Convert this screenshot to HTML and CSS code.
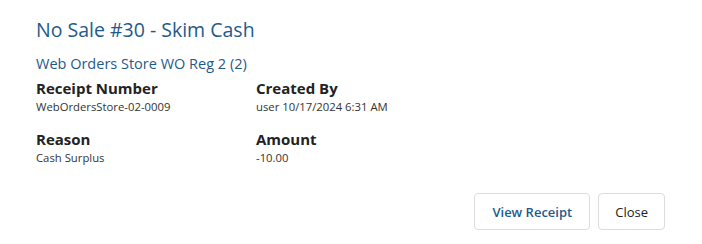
FILE: index.html
```html
<!DOCTYPE html>
<html>
<head>
<meta charset="utf-8">
<link rel="stylesheet" href="styles.css">
</head>
<body>
<div class="dialog">
  <h1 class="title">No Sale #30 - Skim Cash</h1>
  <h2 class="subtitle">Web Orders Store WO Reg 2 (2)</h2>
  <div class="fields">
    <div class="field">
      <div class="label">Receipt Number</div>
      <div class="value">WebOrdersStore-02-0009</div>
    </div>
    <div class="field">
      <div class="label">Created By</div>
      <div class="value">user 10/17/2024 6:31 AM</div>
    </div>
    <div class="field">
      <div class="label">Reason</div>
      <div class="value">Cash Surplus</div>
    </div>
    <div class="field">
      <div class="label">Amount</div>
      <div class="value">-10.00</div>
    </div>
  </div>
  <div class="actions">
    <button class="btn btn-primary">View Receipt</button>
    <button class="btn">Close</button>
  </div>
</div>
</body>
</html>
```
FILE: styles.css
```css
html, body {
  margin: 0;
  padding: 0;
  background: #fff;
}
body {
  font-family: "Open Sans", "Noto Sans", sans-serif;
  color: #222;
  width: 702px;
  height: 244px;
  overflow: hidden;
}
.dialog {
  padding: 16px 37px 0 36px;
}
.title {
  margin: 0;
  font-size: 19.5px;
  font-weight: 400;
  line-height: 28px;
  color: #1f5a8c;
}
.subtitle {
  margin: 9px 0 0 0;
  font-size: 14.5px;
  font-weight: 400;
  line-height: 22px;
  color: #1f5a8c;
}
.fields {
  display: grid;
  grid-template-columns: 220px 220px;
  row-gap: 14px;
  margin-top: 3px;
}
.label {
  font-size: 15px;
  font-weight: 700;
  line-height: 20px;
  color: #222;
}
.value {
  font-size: 11.3px;
  line-height: 17px;
  color: #333;
}
.actions {
  display: flex;
  justify-content: flex-end;
  gap: 8px;
  margin-top: 27px;
}
.btn {
  font-family: inherit;
  font-size: 13px;
  height: 37px;
  padding: 0 16px;
  background: #fff;
  border: 1px solid #dcdcdc;
  border-radius: 4px;
  color: #222;
}
.btn-primary {
  color: #1f5a8c;
  font-weight: 600;
  padding: 0 17px;
}
```
